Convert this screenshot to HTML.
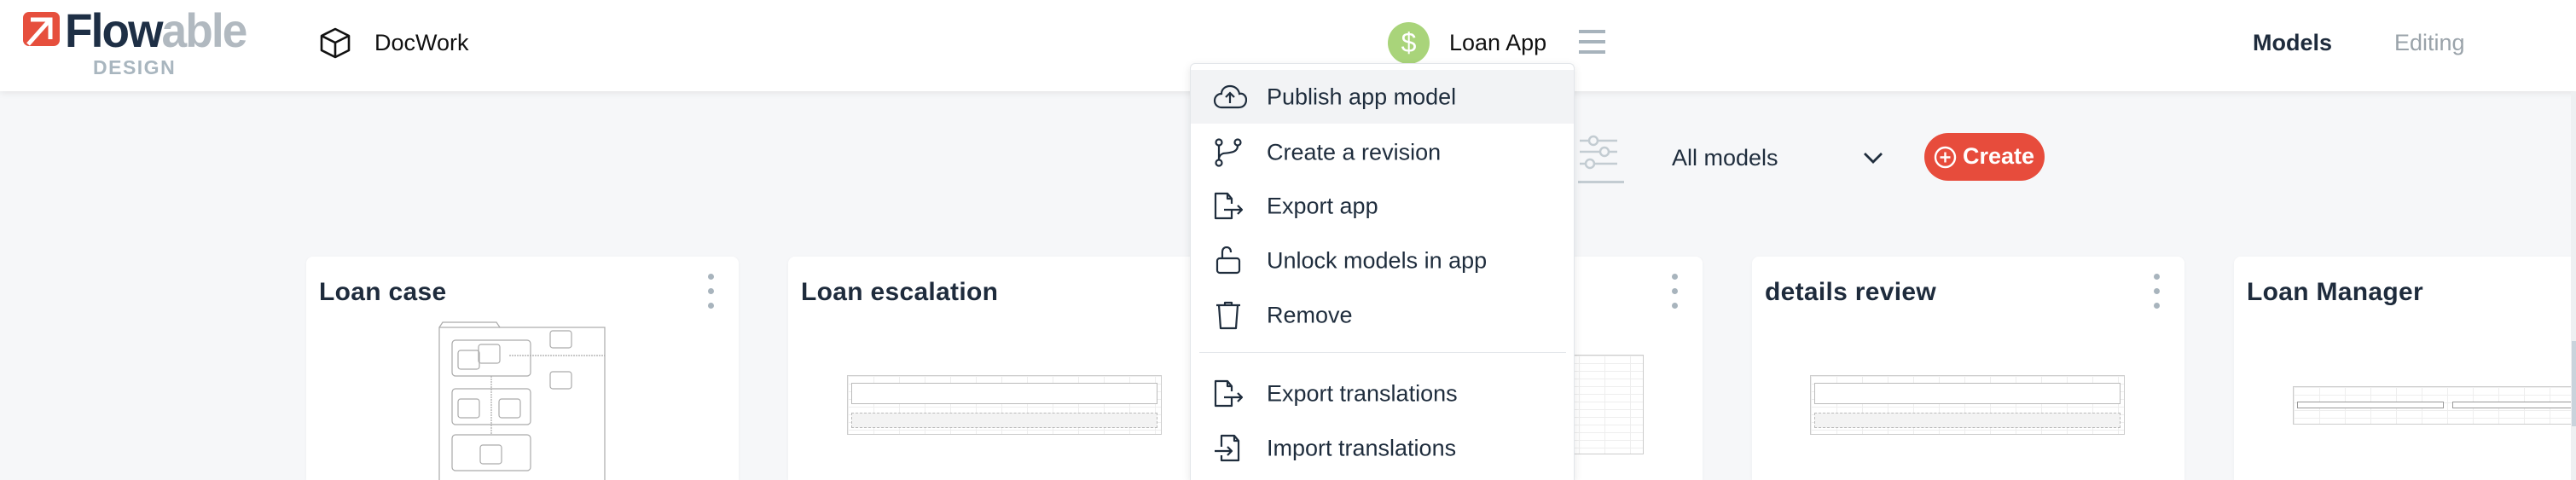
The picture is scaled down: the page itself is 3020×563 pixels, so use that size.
<!DOCTYPE html>
<html><head><meta charset="utf-8"><style>
*{margin:0;padding:0;box-sizing:border-box}
html,body{width:3020px;height:563px;overflow:hidden}
body{background:#f6f7f9;font-family:"Liberation Sans",sans-serif;color:#1f2d3d;position:relative}
.abs{position:absolute}
.header{left:0;top:0;width:3020px;height:107px;background:#fff;box-shadow:0 2px 8px rgba(0,0,0,0.08)}
.card{position:absolute;top:301px;width:507px;height:262px;background:#fff;border-radius:8px 8px 0 0;box-shadow:0 1px 4px rgba(0,0,0,0.04)}
.card h2{position:absolute;left:15px;top:25px;font-size:30px;font-weight:bold;color:#1e2b3c;letter-spacing:0.3px}
.dots{position:absolute;width:7px}
.dots i{display:block;width:7px;height:7px;border-radius:50%;background:#a8b4bd;margin-bottom:10px}
.menu{left:1395px;top:74px;width:451px;height:489px;background:#fff;border:1px solid #e3e6ea;border-bottom:none;border-radius:6px 6px 0 0;box-shadow:0 3px 10px rgba(0,0,0,0.1)}
.item{position:absolute;left:0;width:449px;height:63px}
.item span{position:absolute;left:89px;top:50%;transform:translateY(-50%);font-size:27px;color:#1f2d3d}
.item svg{position:absolute;left:26px;top:50%;transform:translateY(-50%)}
.thumb{position:absolute;border:1px solid #ccc;background:#fff;
background-image:linear-gradient(#eee 1px,transparent 1px),linear-gradient(90deg,#eee 1px,transparent 1px);background-size:30px 9px}
</style></head><body>
<div class="abs header"></div>
<!-- logo -->
<svg class="abs" style="left:27px;top:14px" width="43" height="42" viewBox="0 0 43 42"><rect x="0" y="0" width="43" height="40" rx="7" fill="#e64f3d"/><path d="M9 9 H32 V32" fill="none" stroke="#fff" stroke-width="5"/><path d="M30 11 L6 38" stroke="#fff" stroke-width="5"/></svg>
<div class="abs" style="left:76px;top:3px;font-size:56px;font-weight:bold;letter-spacing:-2px;transform:scaleX(0.95);transform-origin:left"><span style="color:#1e2f45">Flow</span><span style="color:#b1b9c0">able</span></div>
<div class="abs" style="left:109px;top:66px;font-size:23px;font-weight:bold;color:#a9b6bf;letter-spacing:1.5px">DESIGN</div>
<!-- cube -->
<svg class="abs" style="left:374px;top:32px" width="38" height="37" viewBox="0 0 38 37"><path d="M19 2 L35 10 L35 27 L19 35 L3 27 L3 10 Z M3 10 L19 18 L35 10 M19 18 V35" fill="none" stroke="#111" stroke-width="2.6" stroke-linejoin="round"/></svg>
<div class="abs" style="left:439px;top:35px;font-size:27px;color:#111">DocWork</div>
<!-- app -->
<div class="abs" style="left:1627px;top:26px;width:49px;height:49px;border-radius:50%;background:#a9d47a;color:#fff;font-size:32px;text-align:center;line-height:49px">$</div>
<div class="abs" style="left:1699px;top:35px;font-size:27px;color:#111">Loan App</div>
<div class="abs" style="left:1851px;top:35px;width:31px"><div style="height:4px;background:#a7b3bc;margin-bottom:8px"></div><div style="height:4px;background:#a7b3bc;margin-bottom:8px"></div><div style="height:4px;background:#a7b3bc"></div></div>
<div class="abs" style="left:2641px;top:35px;font-size:27px;font-weight:bold;color:#1e2b3c">Models</div>
<div class="abs" style="left:2807px;top:35px;font-size:27px;color:#9aa3aa">Editing</div>
<!-- toolbar -->
<svg class="abs" style="left:1850px;top:158px" width="54" height="58" viewBox="0 0 54 58"><g stroke="#c3ccd2" stroke-width="2.5" fill="none"><path d="M2 7 H46 M2 20 H46 M2 34 H46"/><circle cx="18" cy="7" r="5" fill="#f6f7f9"/><circle cx="31" cy="20" r="5" fill="#f6f7f9"/><circle cx="14" cy="34" r="5" fill="#f6f7f9"/></g><rect x="0" y="54" width="54" height="3" fill="#c3ccd2"/></svg>
<div class="abs" style="left:1960px;top:170px;font-size:27px;color:#1f2d3d">All models</div>
<svg class="abs" style="left:2184px;top:177px" width="24" height="16" viewBox="0 0 24 16"><path d="M2 3 L12 13 L22 3" fill="none" stroke="#1f2d3d" stroke-width="2.8"/></svg>
<div class="abs" style="left:2256px;top:156px;width:141px;height:56px;border-radius:28px;background:#e74c3c"></div>
<svg class="abs" style="left:2267px;top:171px" width="27" height="27" viewBox="0 0 27 27"><circle cx="13.5" cy="13.5" r="11.5" fill="none" stroke="#fff" stroke-width="2.4"/><path d="M13.5 7.5 V19.5 M7.5 13.5 H19.5" stroke="#fff" stroke-width="2.4"/></svg>
<div class="abs" style="left:2301px;top:168px;font-size:27px;font-weight:bold;color:#fff">Create</div>
<!-- cards -->
<div class="card" style="left:359px"><h2>Loan case</h2><div class="dots" style="left:471px;top:20px"><i></i><i></i><i></i></div></div>
<div class="card" style="left:924px"><h2>Loan escalation</h2></div>
<div class="card" style="left:1489px"><div class="dots" style="left:471px;top:20px"><i></i><i></i><i></i></div></div>
<div class="card" style="left:2054px"><h2>details review</h2><div class="dots" style="left:471px;top:20px"><i></i><i></i><i></i></div></div>
<div class="card" style="left:2619px"><h2>Loan Manager</h2></div>
<!-- case diagram -->
<svg class="abs" style="left:510px;top:375px" width="210" height="190" viewBox="0 0 210 190"><g fill="none" stroke="#aaa" stroke-width="1.2"><path d="M5 9 L9 3 H72 L76 9"/><rect x="5" y="9" width="194" height="190"/><rect x="20" y="24" width="92" height="42" rx="4"/><rect x="20" y="81" width="92" height="42" rx="4"/><rect x="20" y="135" width="92" height="42" rx="4"/><rect x="135" y="13" width="25" height="20" rx="3"/><rect x="135" y="61" width="25" height="20" rx="3"/><rect x="27" y="36" width="25" height="22" rx="3"/><rect x="51" y="29" width="25" height="22" rx="3"/><rect x="27" y="93" width="25" height="22" rx="3"/><rect x="75" y="93" width="25" height="22" rx="3"/><rect x="53" y="147" width="25" height="22" rx="3"/><path d="M87 42 H199" stroke-dasharray="2 1"/><path d="M66 66 V135" stroke-dasharray="2 1"/></g></svg>
<div class="thumb" style="left:993px;top:440px;width:369px;height:70px"><div style="position:absolute;left:4px;top:8px;width:359px;height:25px;border:1px solid #bbb;background:#fff"></div><div style="position:absolute;left:4px;top:43px;width:359px;height:18px;border:1px dashed #bbb;background:#f3f3f3"></div></div>
<div class="thumb" style="left:1820px;top:416px;width:107px;height:117px"></div>
<div class="thumb" style="left:2122px;top:440px;width:369px;height:70px"><div style="position:absolute;left:4px;top:8px;width:359px;height:25px;border:1px solid #bbb;background:#fff"></div><div style="position:absolute;left:4px;top:43px;width:359px;height:18px;border:1px dashed #bbb;background:#f3f3f3"></div></div>
<div class="thumb" style="left:2688px;top:453px;width:340px;height:45px"><div style="position:absolute;left:4px;top:17px;width:172px;height:8px;border:1px solid #999;background:#fff"></div><div style="position:absolute;left:186px;top:17px;width:160px;height:8px;border:1px solid #999;background:#fff"></div></div>
<div class="abs" style="left:3014px;top:108px;width:6px;height:455px;background:#eef0f2"></div>
<div class="abs" style="left:3015px;top:400px;width:5px;height:100px;background:#c9d3dc"></div>
<!-- menu -->
<div class="abs menu">
<div class="item" style="top:7px;background:#f2f3f5"><svg width="40" height="30" viewBox="0 0 40 30"><path d="M10 27 H30 C36 27 39 23 39 18 C39 13 35 10 31 11 C30 5 25 2 20 2 C14 2 10 6 10 11 C5 11 2 15 2 19 C2 24 6 27 10 27 Z" fill="none" stroke="#1f2d3d" stroke-width="2.2"/><path d="M20 22 V10 M15 15 L20 10 L25 15" fill="none" stroke="#1f2d3d" stroke-width="2.2"/></svg><span>Publish app model</span></div>
<div class="item" style="top:72px"><svg width="40" height="34" viewBox="0 0 40 34"><g fill="none" stroke="#1f2d3d" stroke-width="2.2"><circle cx="7" cy="5" r="3.5"/><circle cx="29" cy="5" r="3.5"/><circle cx="7" cy="29" r="3.5"/><path d="M7 9 V25 M29 9 C29 17 20 17 12 18 C9 19 7 21 7 25"/></g></svg><span>Create a revision</span></div>
<div class="item" style="top:135px"><svg width="40" height="34" viewBox="0 0 40 34"><g fill="none" stroke="#1f2d3d" stroke-width="2.2" stroke-linejoin="round"><path d="M22 22 V31 H3 V2 H17 L22 8 V14"/><path d="M17 2 V8 H22"/><path d="M13 21 H34 M29 16 L34 21 L29 26"/></g></svg><span>Export app</span></div>
<div class="item" style="top:199px"><svg width="40" height="34" viewBox="0 0 40 34"><g fill="none" stroke="#1f2d3d" stroke-width="2.2"><rect x="5" y="14" width="26" height="17" rx="3"/><path d="M11 14 V7 C11 3 13 1 16 1 C19 1 21 3 21 7"/></g></svg><span>Unlock models in app</span></div>
<div class="item" style="top:263px"><svg width="40" height="34" viewBox="0 0 40 34"><g fill="none" stroke="#1f2d3d" stroke-width="2.2" stroke-linejoin="round"><path d="M4 5 H32 M14 5 V2 H22 V5 M7 5 L9 32 H27 L29 5"/></g></svg><span>Remove</span></div>
<div class="abs" style="left:10px;top:338px;width:430px;height:1px;background:#e3e6ea"></div>
<div class="item" style="top:355px"><svg width="40" height="34" viewBox="0 0 40 34"><g fill="none" stroke="#1f2d3d" stroke-width="2.2" stroke-linejoin="round"><path d="M22 22 V31 H3 V2 H17 L22 8 V14"/><path d="M17 2 V8 H22"/><path d="M13 21 H34 M29 16 L34 21 L29 26"/></g></svg><span>Export translations</span></div>
<div class="item" style="top:419px"><svg width="40" height="34" viewBox="0 0 40 34"><g fill="none" stroke="#1f2d3d" stroke-width="2.2" stroke-linejoin="round"><path d="M10 15 V2 H25 L30 8 V31 H10 V25"/><path d="M25 2 V8 H30"/><path d="M2 20 H22 M17 15 L22 20 L17 25"/></g></svg><span>Import translations</span></div>
</div>
</body></html>
